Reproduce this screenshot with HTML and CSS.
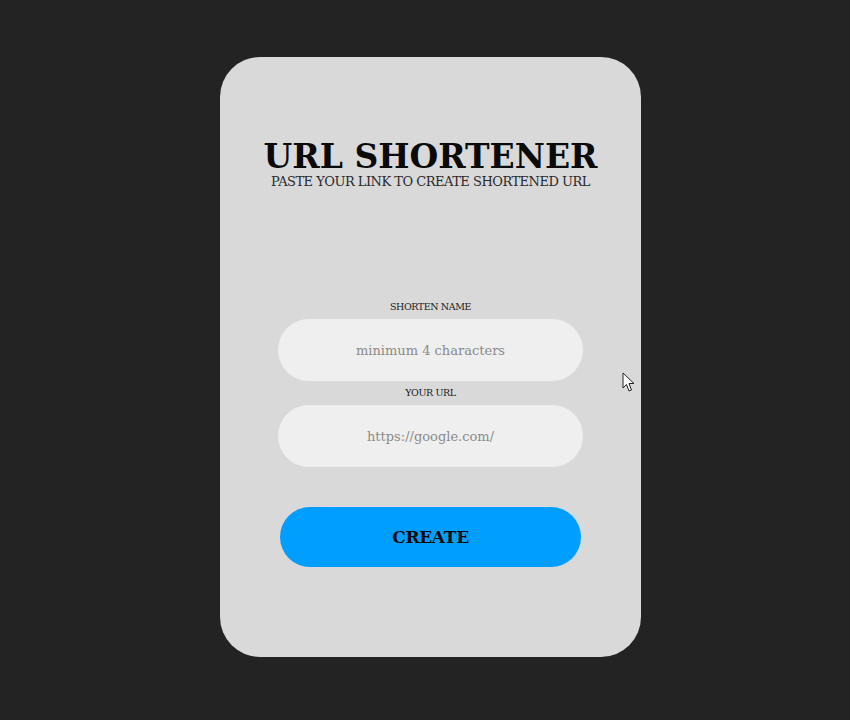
FILE: index.html
```html
<!DOCTYPE html>
<html>
<head>
<meta charset="utf-8">
<link rel="stylesheet" href="styles.css">
</head>
<body>
<main class="stage">
  <section class="card">
    <header class="head">
      <h1 class="title">URL SHORTENER</h1>
      <p class="subtitle">PASTE YOUR LINK TO CREATE SHORTENED URL</p>
    </header>
    <form class="form">
      <label class="label" for="name">SHORTEN NAME</label>
      <input class="field" id="name" type="text" placeholder="minimum 4 characters">
      <label class="label" for="url">YOUR URL</label>
      <input class="field" id="url" type="text" placeholder="https://google.com/">
      <button class="btn" type="button">CREATE</button>
    </form>
  </section>
  <svg class="cursor" width="14" height="21" viewBox="0 0 14 21"><path d="M1 1 L1 16 L4.5 12.5 L7 19 L9.5 18 L7 11.5 L12 11.5 Z" fill="#fff" stroke="#222" stroke-width="1"/></svg>
</main>
</body>
</html>
```
FILE: styles.css
```css
html, body {
  margin: 0;
  padding: 0;
  background: #232323;
}
.stage {
  position: relative;
  width: 850px;
  height: 720px;
  display: flex;
  justify-content: center;
  padding-top: 57px;
  box-sizing: border-box;
}
.card {
  width: 421px;
  height: 600px;
  margin-left: 11px;
  background: #d9d9d9;
  border-radius: 40px;
  display: flex;
  flex-direction: column;
  align-items: center;
  font-family: "DejaVu Serif", serif;
  color: #111;
}
.head {
  margin-top: 83px;
  text-align: center;
}
.title {
  margin: 0;
  font-size: 33px;
  font-weight: bold;
  line-height: 34px;
  color: #0a0a0a;
}
.subtitle {
  margin: 0;
  font-size: 13px;
  line-height: 16px;
  letter-spacing: -0.5px;
  color: #2a2a2a;
}
.form {
  margin-top: 110px;
  display: flex;
  flex-direction: column;
  align-items: center;
}
.label {
  font-size: 9.5px;
  line-height: 13px;
  letter-spacing: -0.4px;
  color: #1a1a1a;
  margin-bottom: 6px;
}
.field {
  width: 305px;
  height: 62px;
  box-sizing: border-box;
  border: none;
  border-radius: 31px;
  background: #efefef;
  text-align: center;
  font-family: "DejaVu Serif", serif;
  font-size: 13px;
  outline: none;
  margin-bottom: 5px;
}
.field::placeholder {
  color: #8a8a8a;
}
.btn {
  margin-top: 35px;
  width: 301px;
  height: 60px;
  border: none;
  border-radius: 30px;
  background: #009eff;
  color: #0a0a0a;
  font-family: "DejaVu Serif", serif;
  font-weight: bold;
  font-size: 17px;
  letter-spacing: -0.3px;
}
.cursor {
  position: absolute;
  left: 622px;
  top: 372px;
}
```
